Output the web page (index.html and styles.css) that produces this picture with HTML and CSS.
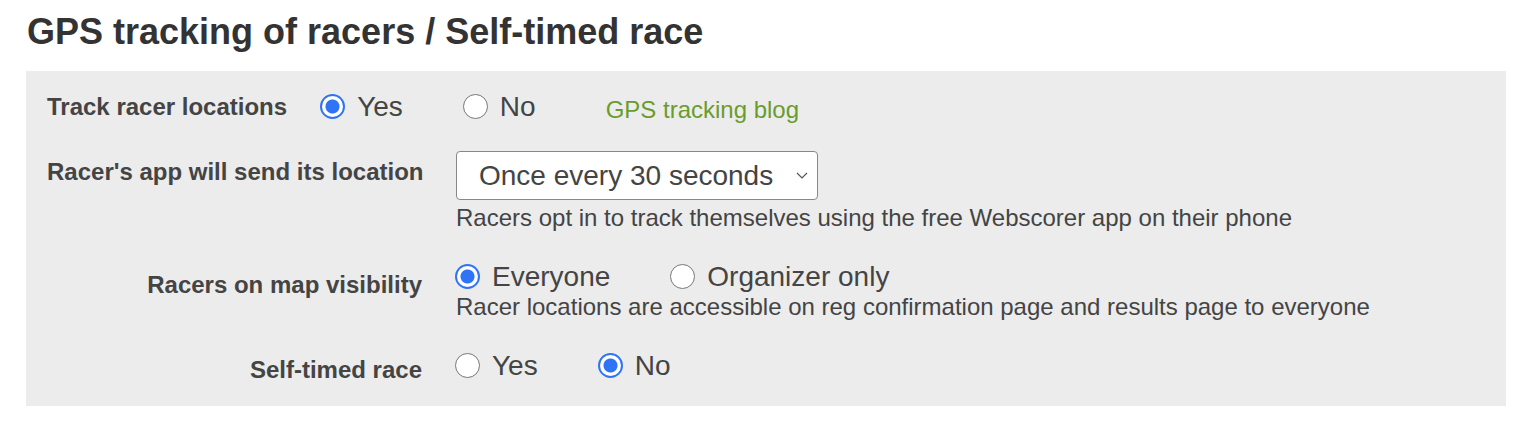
FILE: index.html
```html
<!DOCTYPE html>
<html lang="en">
<head>
    <meta charset="UTF-8">
    <meta name="viewport" content="width=device-width, initial-scale=1.0">
    <title>GPS tracking of racers / Self-timed race</title>
    <link rel="stylesheet" href="styles.css">
</head>
<body>
    <div class="page">
        <h1>GPS tracking of racers / Self-timed race</h1>
        <div class="panel">
            <div class="track-row">
                <span class="label">Track racer locations</span>
                <label class="opt"><input type="radio" name="track" checked> Yes</label>
                <label class="opt"><input type="radio" name="track"> No</label>
                <a class="blog-link" href="#">GPS tracking blog</a>
            </div>

            <div class="settings">
                <div class="label">Racer's app will send its location</div>
                <div class="value">
                    <div class="select-wrap">
                        <select class="interval">
                            <option>Once every 30 seconds</option>
                            <option>Once every 60 seconds</option>
                            <option>Once every 2 minutes</option>
                        </select>
                        <svg class="chevron" width="12" height="7" viewBox="0 0 12 7">
                            <path d="M1 1 L6 6 L11 1" fill="none" stroke="#555" stroke-width="1.2"/>
                        </svg>
                    </div>
                    <div class="help">Racers opt in to track themselves using the free Webscorer app on their phone</div>
                </div>

                <div class="label label-low">Racers on map visibility</div>
                <div class="value">
                    <div class="options">
                        <label class="opt"><input type="radio" name="visibility" checked> Everyone</label>
                        <label class="opt"><input type="radio" name="visibility"> Organizer only</label>
                    </div>
                    <div class="help">Racer locations are accessible on reg confirmation page and results page to everyone</div>
                </div>

                <div class="label label-high">Self-timed race</div>
                <div class="value">
                    <div class="options">
                        <label class="opt"><input type="radio" name="selftimed"> Yes</label>
                        <label class="opt"><input type="radio" name="selftimed" checked> No</label>
                    </div>
                </div>
            </div>
        </div>
    </div>
</body>
</html>
```

FILE: styles.css
```css
body {
    margin: 0;
    background: #fff;
    color: #444;
    font-family: "Liberation Sans", Arial, sans-serif;
}

.page {
    padding: 0 22px 0 26px;
}

h1 {
    margin: 11px 0 18px 1px;
    font-size: 36px;
    font-weight: bold;
    color: #333;
}

.panel {
    background: #ececec;
    padding: 21px 21px 22px 21px;
}

.label {
    font-size: 24px;
    line-height: 28px;
    font-weight: bold;
    color: #444;
    white-space: nowrap;
}

.track-row {
    display: flex;
    align-items: center;
    height: 30px;
}

.track-row .label {
    margin-right: 33px;
}

.opt {
    display: inline-flex;
    align-items: center;
    gap: 12px;
    margin-right: 60px;
    font-size: 28px;
    line-height: 30px;
    color: #444;
}

.opt input {
    appearance: none;
    -webkit-appearance: none;
    margin: 0;
    width: 25px;
    height: 25px;
    border: 1.5px solid #777;
    border-radius: 50%;
    background: #fff;
    box-sizing: border-box;
    position: relative;
    top: -1px;
}

.opt input:checked {
    border: 2px solid #2f74f5;
    background: radial-gradient(circle, #2f74f5 0 6.5px, #fff 7.5px);
}

.blog-link {
    margin: 6px 0 0 10px;
    font-size: 24px;
    line-height: 30px;
    color: #6a9c2c;
    text-decoration: none;
}

.settings {
    display: grid;
    grid-template-columns: 375px 1fr;
    column-gap: 34px;
    row-gap: 31px;
    margin-top: 29px;
}

.settings .label {
    text-align: right;
    padding-top: 7px;
}

.settings .label-low {
    padding-top: 9px;
}

.settings .label-high {
    padding-top: 5px;
}

.select-wrap {
    position: relative;
    width: 362px;
}

.interval {
    display: block;
    appearance: none;
    -webkit-appearance: none;
    width: 362px;
    height: 49px;
    padding: 0 0 0 22px;
    border: 1px solid #888;
    border-radius: 4px;
    background: #fff;
    color: #444;
    font-family: inherit;
    font-size: 28px;
}

.chevron {
    position: absolute;
    right: 10px;
    top: 21px;
}

.help {
    margin-top: 4px;
    font-size: 24px;
    line-height: 27px;
    color: #444;
}

.options {
    display: flex;
    margin-left: -1px;
}

.options + .help {
    margin-top: 1px;
}
```
